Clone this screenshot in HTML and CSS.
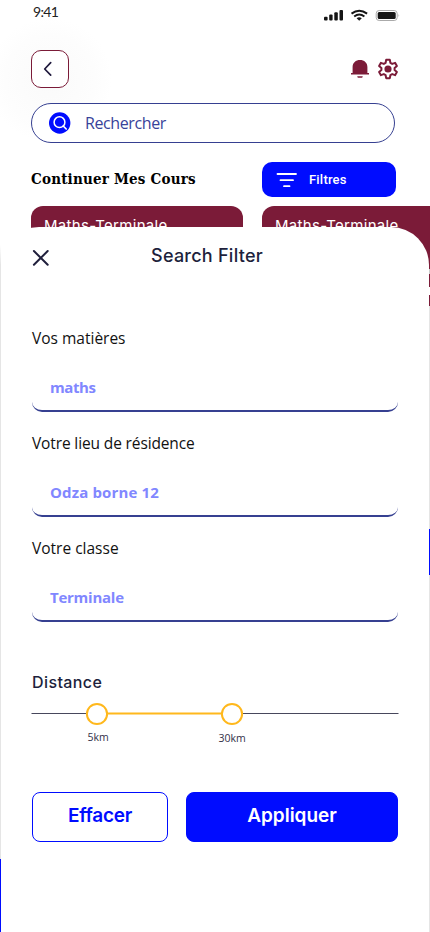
FILE: index.html
```html
<!DOCTYPE html>
<html lang="fr">
<head>
<meta charset="utf-8">
<title>Search Filter</title>
<link rel="stylesheet" href="styles.css">
</head>
<body>
<div class="app">
  <div class="status">
    <span class="time">9:41</span>
    <svg class="status-icons" width="76" height="14" viewBox="0 0 76 14">
      <g fill="#151515">
        <rect x="0" y="8.700" width="3.600" height="3.800" rx="1"/>
        <rect x="5.200" y="6.500" width="3.400" height="6" rx="1"/>
        <rect x="10.300" y="4.300" width="3.500" height="8.200" rx="1"/>
        <rect x="15.500" y="2" width="3.500" height="10.500" rx="1"/>
        <path d="M32.600 10.200q2.600-1.800 5.200 0l-2.600 2.600z"/>
        <rect x="53.700" y="4" width="18" height="7" rx="1.500"/>
      </g>
      <path d="M27.500 5.600q7.700-5.600 15.600 0M30.200 8.500q5-3.800 10.200 0" fill="none" stroke="#151515" stroke-width="2"/>
      <rect x="52.200" y="2.500" width="21" height="10" rx="3" fill="none" stroke="#aaa"/>
      <path d="M74.600 6v3q1.200-1.500 0-3z" fill="#999"/>
    </svg>
  </div>
  <header class="topbar">
    <button class="back" aria-label="Retour">
      <svg width="36" height="36" viewBox="0 0 36 36"><path d="M18.700 11.700 12.700 18l6 6.200" fill="none" stroke="#201a3d" stroke-width="1.700" stroke-linecap="round" stroke-linejoin="round"/></svg>
    </button>
    <div class="actions">
      <svg width="20" height="20" viewBox="0 0 20 20" fill="#7b1b38"><path d="M2.600 14V8C2.600 3.700 5.800 1 10 1s7.400 2.700 7.400 7v6H19v1.500H1V14zM7.200 17.200h5.600l-.6 1.500H7.800z"/></svg>
      <svg width="22" height="22" viewBox="0 0 24 24" fill="none" stroke="#7b1b38"><path stroke-width="2.200" stroke-linejoin="round" d="M10 2h4l.6 3.300 2 1.100 3.100-1.100 2 3.500-2.500 2.100v2.300l2.500 2.100-2 3.400-3.100-1.100-2 1.100L14 22h-4l-.6-3.300-2-1.100-3.100 1.100-2-3.400 2.500-2.100v-2.300L2.300 8.800l2-3.500 3.100 1.100 2-1.100z"/><circle cx="12" cy="12" r="3.900" fill="#7b1b38" stroke="none"/></svg>
    </div>
  </header>
  <div class="search">
    <svg width="22" height="22" viewBox="0 0 22 22"><circle cx="10.700" cy="11" r="10.700" fill="#000cff"/><circle cx="10.500" cy="10.200" r="5.400" fill="none" stroke="#fff" stroke-width="1.500"/><path d="m14.200 14 3 3" stroke="#fff" stroke-width="1.700" stroke-linecap="round"/></svg>
    <span class="search-text">Rechercher</span>
  </div>
  <div class="section-head">
    <h2>Continuer Mes Cours</h2>
    <button class="filters">
      <svg width="22" height="16" viewBox="0 0 22 16"><path d="M1.500 2h18.500M4.500 8.200h12.500M8 14.200h5.500" stroke="#fff" stroke-width="1.800" stroke-linecap="round"/></svg>
      <span>Filtres</span>
    </button>
  </div>
  <div class="cards">
    <div class="card">Maths-Terminale</div>
    <div class="card">Maths-Terminale</div>
  </div>
  <div class="edge edge-left"></div>
  <div class="edge edge-right"></div>

  <section class="sheet">
    <div class="sheet-head">
      <svg width="18" height="18" viewBox="0 0 18 18"><path d="m1.900 2 13.800 13.800m0-13.800L1.900 15.800" stroke="#201f3c" stroke-width="2" stroke-linecap="round"/></svg>
      <h1>Search Filter</h1>
    </div>
    <div class="fields">
      <div class="field"><label>Vos matières</label><div class="input i1">maths</div></div>
      <div class="field"><label class="l2">Votre lieu de résidence</label><div class="input i2">Odza borne 12</div></div>
      <div class="field"><label>Votre classe</label><div class="input i3">Terminale</div></div>
    </div>
    <h3>Distance</h3>
    <div class="slider">
      <svg width="368" height="26" viewBox="0 0 368 26"><path d="M.5 12.500h367" stroke="#47475c"/><path d="M66 12.500h135" stroke="#ffb81c" stroke-width="2.200"/><circle cx="66" cy="13" r="10.100" fill="#fff" stroke="#ffb81c" stroke-width="2"/><circle cx="201" cy="13" r="10.100" fill="#fff" stroke="#ffb81c" stroke-width="2"/></svg>
      <div class="ticks"><span>5km</span><span class="far">30km</span></div>
    </div>
    <div class="buttons">
      <button class="clear">Effacer</button>
      <button class="apply">Appliquer</button>
    </div>
  </section>
</div>
</body>
</html>
```
FILE: styles.css
```css
* { box-sizing: border-box; }
body { margin: 0; background: #fff; }
button { padding: 0; font: inherit; }
svg { display: block; flex: none; }
.app {
  position: relative;
  width: 430px;
  height: 932px;
  overflow: hidden;
  background: radial-gradient(circle at 50px 80px, #fafafa 0, #fdfdfd 45px, #fff 62px);
}
.status {
  display: flex;
  justify-content: space-between;
  height: 50px;
  padding: 0 30px 0 33px;
}
.time { font: 400 14px/24px Lato, sans-serif; color: #222; letter-spacing: -.7px; }
.status-icons { margin-top: 8px; }
.topbar {
  display: flex;
  align-items: center;
  justify-content: space-between;
  height: 38px;
  padding: 0 31px;
}
.back { width: 38px; height: 38px; border: 1px solid #7b1b38; border-radius: 10px; background: #fff; }
.actions { display: flex; gap: 7px; align-items: center; }
.search {
  display: flex;
  align-items: center;
  gap: 14px;
  width: 364px;
  height: 40px;
  margin: 15px 0 0 31px;
  padding-left: 17px;
  border: 1px solid #364091;
  border-radius: 20px;
  background: #fff;
}
.search-text { font: 400 16px/20px "Open Sans", sans-serif; letter-spacing: -.4px; color: #38429a; }
.section-head {
  display: flex;
  justify-content: space-between;
  align-items: center;
  height: 35px;
  margin: 19px 34px 9px 31px;
}
h2 { margin: 0 0 2px; font: 700 15px/20px "DejaVu Serif Condensed", "DejaVu Serif", serif; letter-spacing: .2px; color: #000; white-space: nowrap; }
.filters {
  display: flex;
  align-items: center;
  gap: 11px;
  width: 134px;
  height: 35px;
  padding-left: 14px;
  border: 0;
  border-radius: 10px;
  background: #000cff;
  color: #fff;
  font: 500 13px/18px Roboto, sans-serif;
  letter-spacing: .2px;
}
.cards { display: flex; gap: 19px; padding-left: 31px; }
.card {
  flex: none;
  width: 212px;
  height: 100px;
  padding: 10px 13px;
  border-radius: 12px;
  background: #7b1b38;
  color: #fff;
  font: 400 15px/20px Inter, sans-serif;
  letter-spacing: .3px;
}
.edge { position: absolute; width: 1px; }
.edge-left { left: 0; top: 245px; height: 687px; background: linear-gradient(#fff 0, #e5e5e5 20px, #e5e5e5 614px, #000cff 614px); }
.edge-right { right: 0; top: 264px; height: 668px; background: linear-gradient(#7b1b38 0 5px, #ccc 5px 10px, #7b1b38 10px 23px, #fff 23px 31px, #7b1b38 31px 42px, #e5e5e5 42px 265px, #000cff 265px 311px, #e5e5e5 311px); }
.sheet {
  position: absolute;
  top: 227px;
  left: 1px;
  width: 428px;
  height: 705px;
  padding: 0 31px;
  border-radius: 38px 38px 0 0;
  background: #fff;
}
.sheet-head { display: flex; align-items: center; height: 60px; }
.sheet-head svg { margin-top: 2px; }
h1 { margin: 0 0 2px 101px; font: 500 18px/24px Inter, sans-serif; letter-spacing: .25px; color: #201f3c; }
.fields { display: grid; gap: 21px; margin-top: 41px; }
.field { height: 84px; }
.field label { display: block; font: 400 15.500px/20px "Open Sans", sans-serif; color: #111; }
.field .l2 { letter-spacing: -.13px; }
.input {
  height: 44px;
  margin-top: 20px;
  padding-left: 18px;
  border-bottom: 2px solid #364091;
  border-radius: 10px;
  color: #8187ff;
  font: 700 15px/38px "Open Sans", sans-serif;
}
.i1 { letter-spacing: -.4px; }
.i2 { letter-spacing: .15px; }
.i3 { letter-spacing: -.25px; }
h3 { margin: 48px 0 0; font: 500 16px/24px Inter, sans-serif; letter-spacing: .4px; color: #201f3c; }
.slider { margin-top: 7px; margin-left: -1px; height: 91px; }
.ticks { display: grid; grid-template-columns: 134px 134px; text-align: center; font: 400 10.500px/20px "Open Sans", sans-serif; color: #333149; }
.far { padding-top: 1px; }
.buttons { display: flex; gap: 18px; }
.buttons button { height: 50px; padding-bottom: 2px; border-radius: 8px; border: 1px solid #000cff; font: 600 19px/46px Inter, sans-serif; }
.buttons .clear { width: 136px; color: #000cff; background: #fff; letter-spacing: -.3px; }
.apply { width: 212px; color: #fff; background: #000cff; }
```
